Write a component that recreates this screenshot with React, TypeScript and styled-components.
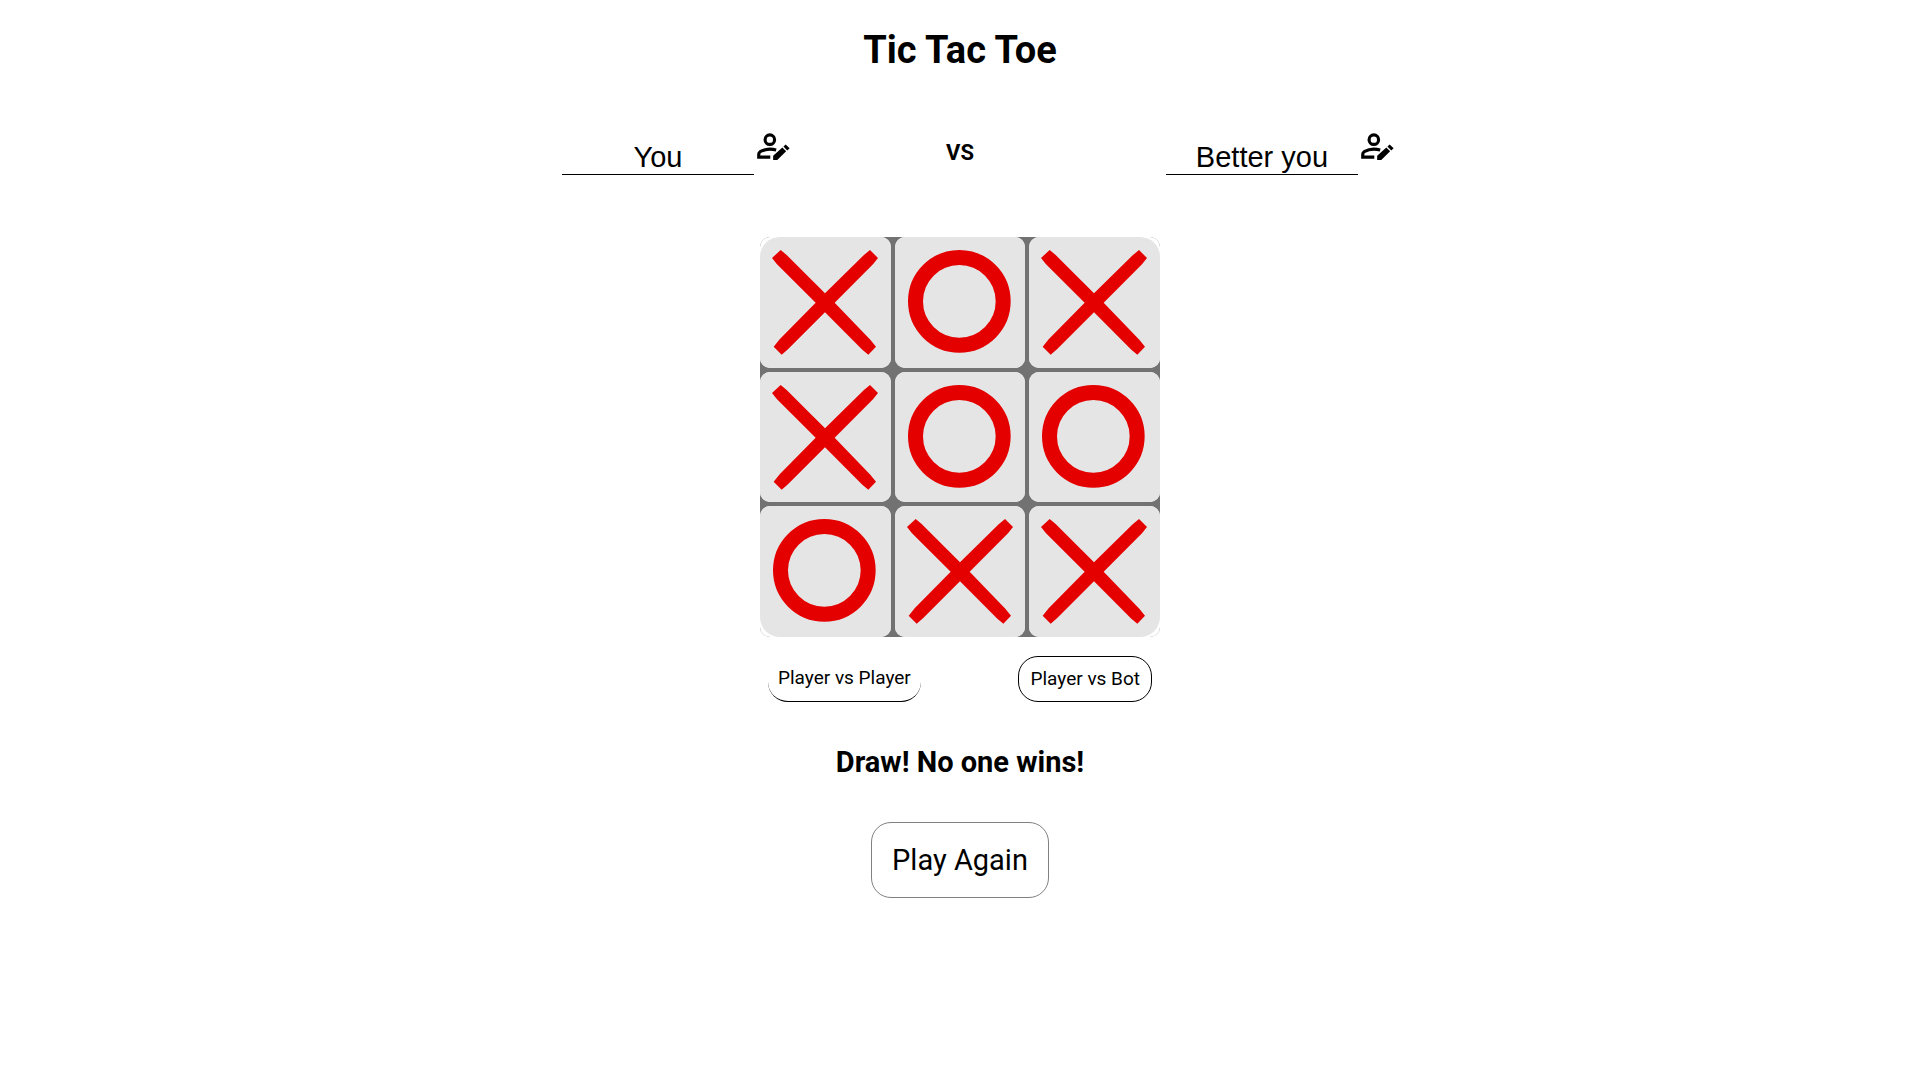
import React, { useState } from "react";
import styled, { createGlobalStyle, css } from "styled-components";

const GlobalStyle = createGlobalStyle`
  * { box-sizing: border-box; }
  body {
    margin: 0;
    background: #fff;
    color: #000;
    font-family: Roboto, "Liberation Sans", sans-serif;
  }
`;

const Page = styled.main`
  display: flex;
  flex-direction: column;
  align-items: center;
  padding-top: 25px;
`;

const Title = styled.h1`
  margin: 0;
  font-size: 38px;
  line-height: 50px;
  font-weight: 700;
`;

const Players = styled.section`
  display: flex;
  justify-content: center;
  align-items: center;
  gap: 10vw;
  margin-top: 55px;
  height: 45px;
`;

const Player = styled.div`
  position: relative;
  width: 10vw;
`;

const NameInput = styled.input`
  display: block;
  width: 100%;
  height: 45px;
  padding: 10px 0 0;
  border: 0;
  border-bottom: 1px solid #000;
  outline: 0;
  background: transparent;
  color: #000;
  font-family: "Liberation Sans", Arial, sans-serif;
  font-size: 29px;
  text-align: center;
`;

const EditButton = styled.button`
  position: absolute;
  left: 100%;
  top: -3px;
  padding: 0;
  border: 0;
  background: none;
  color: #000;
  cursor: pointer;

  svg {
    display: block;
    width: 38px;
    height: 38px;
  }
`;

const Versus = styled.span`
  font-size: 22px;
  line-height: 28px;
  font-weight: 700;
`;

const Board = styled.section`
  display: grid;
  grid-template-columns: repeat(3, 1fr);
  gap: 4px;
  width: 400px;
  aspect-ratio: 1;
  margin-top: 62px;
  border-radius: 10px;
  background: #727272;
`;

type Corner = "top-left" | "top-right" | "bottom-left" | "bottom-right";

const Cell = styled.button<{ $corner?: Corner }>`
  padding: 0;
  border: 0;
  border-radius: 10px;
  background: #fff;
  cursor: pointer;

  svg {
    display: block;
    width: 100%;
    height: 100%;
    border-radius: 10px;
    background: #e5e5e5;
    ${({ $corner }) => $corner && css`border-${$corner}-radius: 20px;`}
  }
`;

const Modes = styled.div`
  display: flex;
  justify-content: space-between;
  width: 20vw;
  min-width: 320px;
  margin-top: 19px;
`;

const ModeButton = styled.button<{ $active?: boolean }>`
  height: 46px;
  padding: ${({ $active }) => ($active ? "0 10px 2px" : "0 11px 2px")};
  border: 0 solid #000;
  border-width: ${({ $active }) => ($active ? "0 0 1px" : "1px")};
  border-radius: 20px;
  background: #fff;
  color: #000;
  font-family: inherit;
  font-size: 19px;
  cursor: pointer;
`;

const Result = styled.h2`
  margin: 40px 0 0;
  font-size: 29px;
  line-height: 40px;
  font-weight: 700;
`;

const PlayAgain = styled.button`
  height: 76px;
  margin-top: 40px;
  padding: 0 20px;
  border: 1px solid #808080;
  border-radius: 20px;
  background: #fff;
  color: #000;
  font-family: inherit;
  font-size: 29px;
  cursor: pointer;
`;

const EditIcon = () => (
  <svg viewBox="0 0 24 24" fill="none" aria-hidden="true">
    <circle cx="10" cy="8" r="3" stroke="currentColor" strokeWidth="2" />
    <path d="M14 14.5Q12 14 10 14C7.6 14 5.6 14.7 3.9 15.6Q3 16.2 3 17.2V19h7.3" stroke="currentColor" strokeWidth="2" />
    <path d="M12.1 20.9V18.1L17.9 12.9 20.3 15.3 14.7 20.9ZM18.6 12.3L20 11 22.5 13.4 21 14.8Z" fill="currentColor" />
  </svg>
);

const Cross = () => (
  <svg viewBox="0 0 392 392" aria-hidden="true">
    <path
      fill="#e50000"
      d="M62 39L80 54L195 169L311 55L330 39L354 63L339 82L224 197L331 308L348 329L325 353L307 338L195 226L84 337L65 353L41 329L59 307L167 197L51 82L36 63Z"
    />
  </svg>
);

const Nought = () => (
  <svg viewBox="0 0 392 392" aria-hidden="true">
    <circle cx="193" cy="193" r="131.5" fill="none" stroke="#e50000" strokeWidth="45" />
  </svg>
);

const marks = ["X", "O", "X", "X", "O", "O", "O", "X", "X"];
const corners: Record<number, Corner> = {
  0: "top-left",
  2: "top-right",
  6: "bottom-left",
  8: "bottom-right",
};

function PlayerName({ initial, label }: { initial: string; label: string }) {
  const [name, setName] = useState(initial);
  return (
    <Player>
      <NameInput aria-label={label} value={name} onChange={(e) => setName(e.target.value)} />
      <EditButton type="button" aria-label={`Edit ${label}`}>
        <EditIcon />
      </EditButton>
    </Player>
  );
}

export default function App() {
  return (
    <>
      <GlobalStyle />
      <Page>
        <Title>Tic Tac Toe</Title>
        <Players>
          <PlayerName initial="You" label="first player name" />
          <Versus>VS</Versus>
          <PlayerName initial="Better you" label="second player name" />
        </Players>
        <Board aria-label="Board">
          {marks.map((mark, i) => (
            <Cell key={i} type="button" $corner={corners[i]} aria-label={`Square ${i + 1}: ${mark}`}>
              {mark === "X" ? <Cross /> : <Nought />}
            </Cell>
          ))}
        </Board>
        <Modes>
          <ModeButton type="button" $active>Player vs Player</ModeButton>
          <ModeButton type="button">Player vs Bot</ModeButton>
        </Modes>
        <Result>Draw! No one wins!</Result>
        <PlayAgain type="button">Play Again</PlayAgain>
      </Page>
    </>
  );
}
